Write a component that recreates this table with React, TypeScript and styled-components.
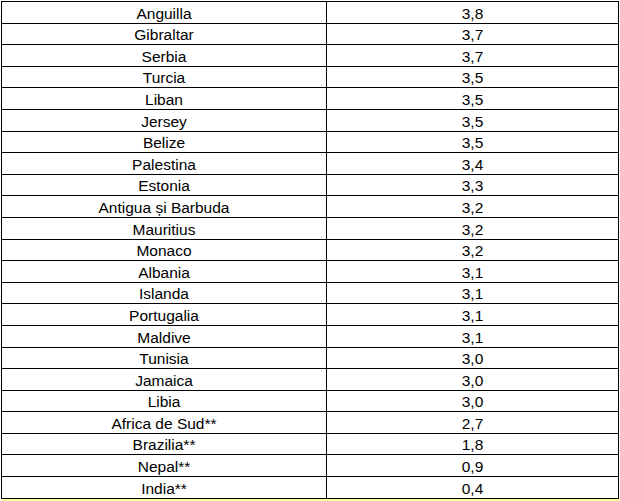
import React from "react";
import styled, { createGlobalStyle } from "styled-components";

const rows: [string, string][] = [
  ["Anguilla", "3,8"],
  ["Gibraltar", "3,7"],
  ["Serbia", "3,7"],
  ["Turcia", "3,5"],
  ["Liban", "3,5"],
  ["Jersey", "3,5"],
  ["Belize", "3,5"],
  ["Palestina", "3,4"],
  ["Estonia", "3,3"],
  ["Antigua și Barbuda", "3,2"],
  ["Mauritius", "3,2"],
  ["Monaco", "3,2"],
  ["Albania", "3,1"],
  ["Islanda", "3,1"],
  ["Portugalia", "3,1"],
  ["Maldive", "3,1"],
  ["Tunisia", "3,0"],
  ["Jamaica", "3,0"],
  ["Libia", "3,0"],
  ["Africa de Sud**", "2,7"],
  ["Brazilia**", "1,8"],
  ["Nepal**", "0,9"],
  ["India**", "0,4"],
];

function App() {
  return (
    <Page>
      <GlobalStyle />
      <Table>
        <tbody>
          {rows.map(([country, value]) => (
            <Row key={country}>
              <Cell>{country}</Cell>
              <Cell>{value}</Cell>
            </Row>
          ))}
        </tbody>
      </Table>
      <Highlight />
    </Page>
  );
}

const GlobalStyle = createGlobalStyle`
  body {
    margin: 0;
    background: #fff;
    font-family: "Liberation Sans", Arial, sans-serif;
  }
`;

const Page = styled.div`
  width: 620px;
  height: 501px;
  padding: 1px 0 0 1px;
  box-sizing: border-box;
  overflow: hidden;
`;

const Table = styled.table`
  width: 618px;
  height: 498px;
  border-collapse: collapse;
  table-layout: fixed;
  color: #000;
`;

const Row = styled.tr`
  td:first-child {
    width: 324px;
  }
`;

const Cell = styled.td`
  border: 1px solid #000;
  padding: 0;
  text-align: center;
  vertical-align: bottom;
  font-size: 15.5px;
  line-height: 19px;
`;

const Highlight = styled.div`
  margin-left: 1px;
  width: 618px;
  height: 2px;
  background: #ffff9e;
`;

export default App;
